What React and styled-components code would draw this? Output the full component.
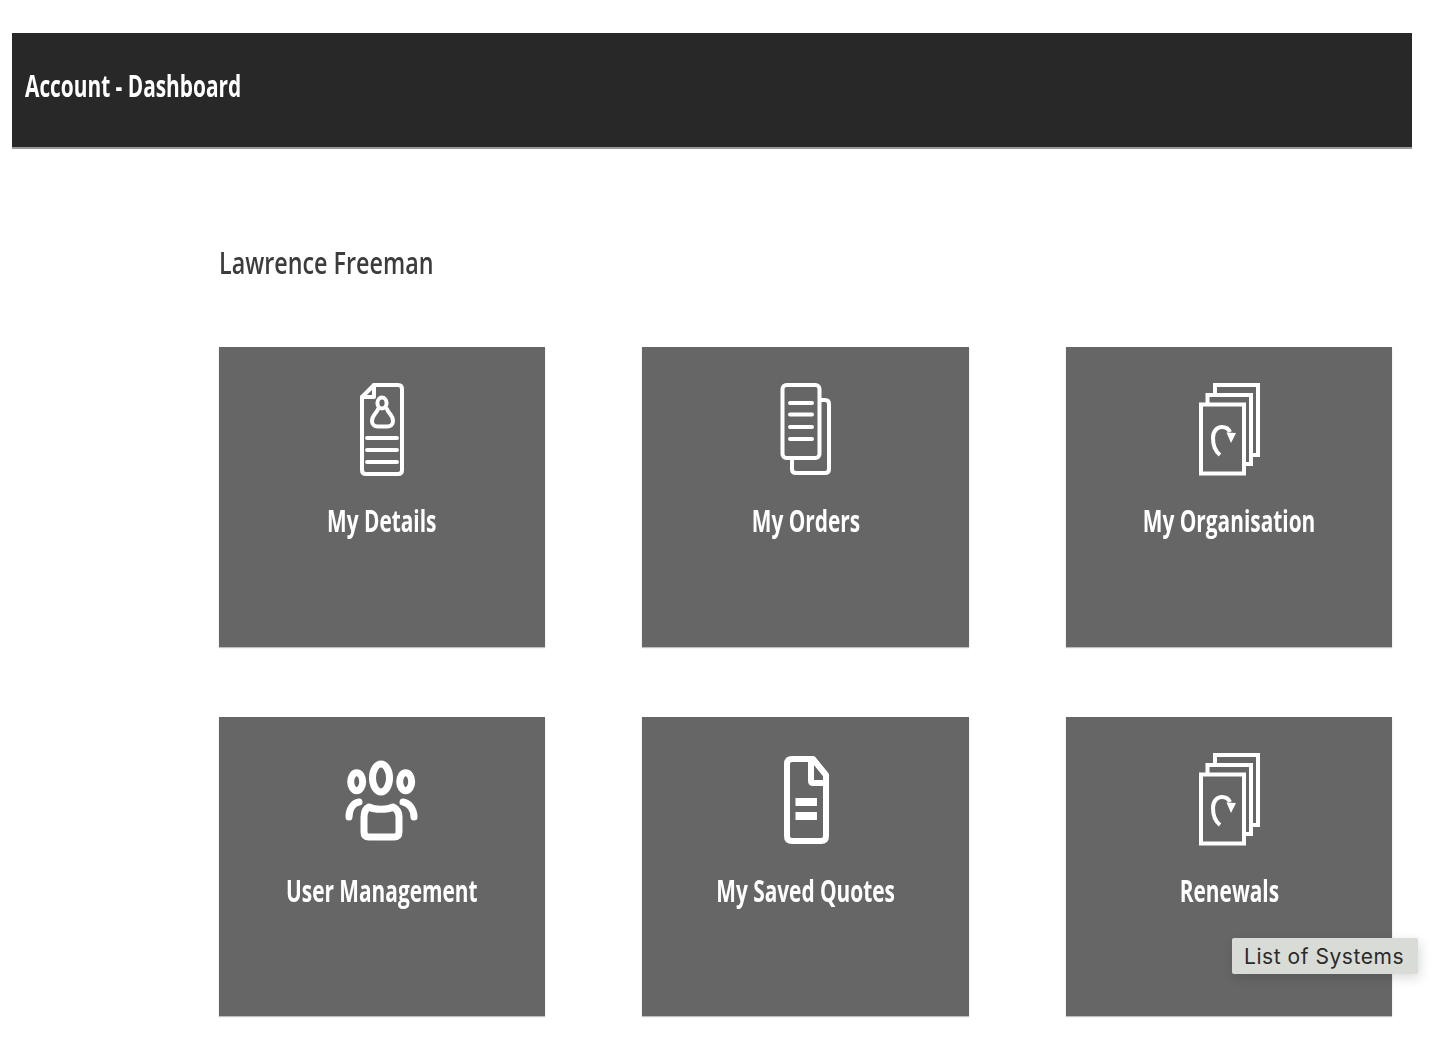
import React from 'react'
import styled, { createGlobalStyle } from 'styled-components'

const GlobalStyle = createGlobalStyle`
  html, body {
    margin: 0;
    padding: 0;
    background: #fff;
  }
  body {
    font-family: "Open Sans", "Liberation Sans", sans-serif;
  }
`

const Page = styled.div`
  position: relative;
  width: 1450px;
  height: 1062px;
  padding-top: 33px;
  box-sizing: border-box;
  overflow: hidden;
`

const Header = styled.header`
  width: 1400px;
  height: 116px;
  margin-left: 12px;
  padding-left: 13px;
  box-sizing: border-box;
  display: flex;
  align-items: center;
  background: #282828;
  border-bottom: 2px solid #9a9a9a;
`

const Squeezed = styled.span`
  display: inline-block;
  white-space: nowrap;
  transform: scaleX(${(props) => props.$squeeze});
  transform-origin: ${(props) => props.$origin || 'left center'};
  filter: blur(0.5px);
`

const Title = styled(Squeezed)`
  color: #fff;
  font-size: 30px;
  font-weight: 700;
  line-height: 40px;
  margin-bottom: 8px;
`

const Main = styled.main`
  padding: 91px 58px 0 219px;
`

const UserName = styled(Squeezed)`
  display: block;
  color: #3c3c3c;
  font-size: 31px;
  font-weight: 600;
  line-height: 44px;
  margin-bottom: 63px;
`

const Grid = styled.div`
  display: grid;
  grid-template-columns: 326px 327px 326px;
  grid-auto-rows: 299.5px;
  column-gap: 97px;
  row-gap: 70px;
`

const Card = styled.a`
  display: flex;
  flex-direction: column;
  align-items: center;
  padding-top: 33px;
  box-sizing: border-box;
  background: #666;
  box-shadow: 0 1px 1px rgba(0, 0, 0, 0.25);
`

const Icon = styled.svg`
  display: block;
  width: 100px;
  height: 100px;
  fill: none;
  stroke: #fff;
  stroke-width: ${(props) => props.$weight || 4};
  stroke-linejoin: ${(props) => (props.$sharp ? 'miter' : 'round')};
  stroke-linecap: ${(props) => (props.$sharp ? 'butt' : 'round')};
  filter: blur(0.5px);
`

const Label = styled(Squeezed)`
  color: #fff;
  font-size: 30px;
  font-weight: 700;
  line-height: 40px;
  margin-top: 21px;
`

const Tooltip = styled.div`
  position: absolute;
  left: 1232px;
  top: 938px;
  width: 186px;
  height: 36px;
  padding-left: 12px;
  box-sizing: border-box;
  display: flex;
  align-items: center;
  background: #d9dbd6;
  border-radius: 2px;
  box-shadow: 2px 4px 12px rgba(0, 0, 0, 0.14);
  color: #2a2a2a;
  font-family: Inter, "Liberation Sans", sans-serif;
  font-size: 21px;
  letter-spacing: 0.55px;
  white-space: nowrap;
`

const DetailsIcon = () => (
  <Icon viewBox="0 0 100 100">
    <path d="M42 5H66Q70 5 70 9V90Q70 94 66 94H34Q30 94 30 90V17Z" />
    <path d="M42 5V17H30" />
    <ellipse cx="50" cy="23" rx="4.6" ry="5.4" />
    <path d="M46 29C45 33 40 35 40 41C40 44.5 42.5 46.5 45.5 46.5H55.5C58.5 46.5 61 44.5 61 41C61 35 56 33 55 29" />
    <path d="M35 58H65M35 70H65M35 82H65" />
  </Icon>
)

const OrdersIcon = () => (
  <Icon viewBox="0 0 100 100">
    <rect x="26.5" y="5" width="37" height="73" rx="4" />
    <path d="M64 20H69Q73 20 73 24V89Q73 93 69 93H40Q36 93 36 89V78" />
    <path d="M34 23H56M34 34.5H56M34 47H56M34 59H56" />
  </Icon>
)

const StackIcon = () => (
  <Icon viewBox="0 0 100 100" $sharp>
    <rect x="22" y="24.5" width="43" height="69" />
    <path d="M28.5 23V15H72V84H66" />
    <path d="M36 13V5H79V75H74" />
    <path d="M41 75C36 71 34 65 34 58C34 51 38 47 43 47C46.5 47 49.5 48.5 51 52" />
    <path d="M47.5 52.5L57 53L52 63Z" fill="#fff" stroke="none" />
  </Icon>
)

const UsersIcon = () => (
  <Icon viewBox="0 0 100 100" $weight={7}>
    <ellipse cx="49" cy="28" rx="8.5" ry="14" />
    <ellipse cx="24.7" cy="31.7" rx="6" ry="9" />
    <ellipse cx="73.7" cy="31.7" rx="6" ry="9" />
    <path d="M37 57C43 60 55 60 61 57C65 59 67 62 67 67V82Q67 87 62 87H37Q32 87 32 82V67C32 62 33 59 37 57Z" />
    <path d="M27 52C21 53 17 59 17 67" />
    <path d="M71 52C77 53 82 59 82 67" />
  </Icon>
)

const QuoteIcon = () => (
  <Icon viewBox="0 0 100 100" $weight={6}>
    <path d="M36 9H57L70 25V86Q70 91 65 91H36Q31 91 31 86V14Q31 9 36 9Z" />
    <path d="M55 10V31Q55 33 57 33H70" />
    <rect x="39.5" y="48" width="21.5" height="8" fill="#fff" stroke="none" />
    <rect x="39.5" y="62" width="21.5" height="8" fill="#fff" stroke="none" />
  </Icon>
)

const cards = [
  { label: 'My Details', icon: DetailsIcon },
  { label: 'My Orders', icon: OrdersIcon },
  { label: 'My Organisation', icon: StackIcon },
  { label: 'User Management', icon: UsersIcon },
  { label: 'My Saved Quotes', icon: QuoteIcon },
  { label: 'Renewals', icon: StackIcon }
]

export default function App() {
  return (
    <Page>
      <GlobalStyle />
      <Header>
        <Title $squeeze={0.695}>Account - Dashboard</Title>
      </Header>
      <Main>
        <UserName $squeeze={0.752}>Lawrence Freeman</UserName>
        <Grid>
          {cards.map((card) => (
            <Card key={card.label}>
              <card.icon />
              <Label $squeeze={0.695} $origin="center center">
                {card.label}
              </Label>
            </Card>
          ))}
        </Grid>
      </Main>
      <Tooltip>List of Systems</Tooltip>
    </Page>
  )
}
